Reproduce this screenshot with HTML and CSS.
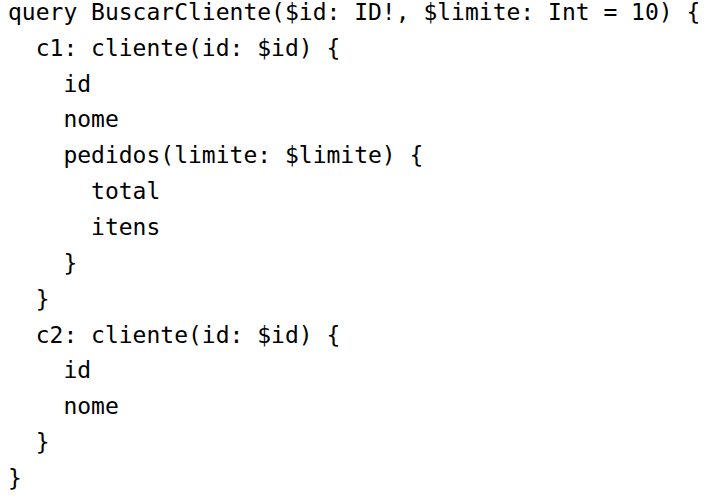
FILE: index.html
```html
<!DOCTYPE html>
<html>
<head>
<meta charset="utf-8">
<link rel="stylesheet" href="styles.css">
</head>
<body>
<pre class="code">query BuscarCliente($id: ID!, $limite: Int = 10) {
  c1: cliente(id: $id) {
    id
    nome
    pedidos(limite: $limite) {
      total
      itens
    }
  }
  c2: cliente(id: $id) {
    id
    nome
  }
}</pre>
</body>
</html>
```
FILE: styles.css
```css
html, body {
  margin: 0;
  padding: 0;
  background: #ffffff;
}
.code {
  margin: -5.1px 0 0 8px;
  padding: 0;
  font-family: "DejaVu Sans Mono", "Liberation Mono", monospace;
  font-size: 23px;
  line-height: 35.85px;
  color: #000000;
  white-space: pre;
}
```
